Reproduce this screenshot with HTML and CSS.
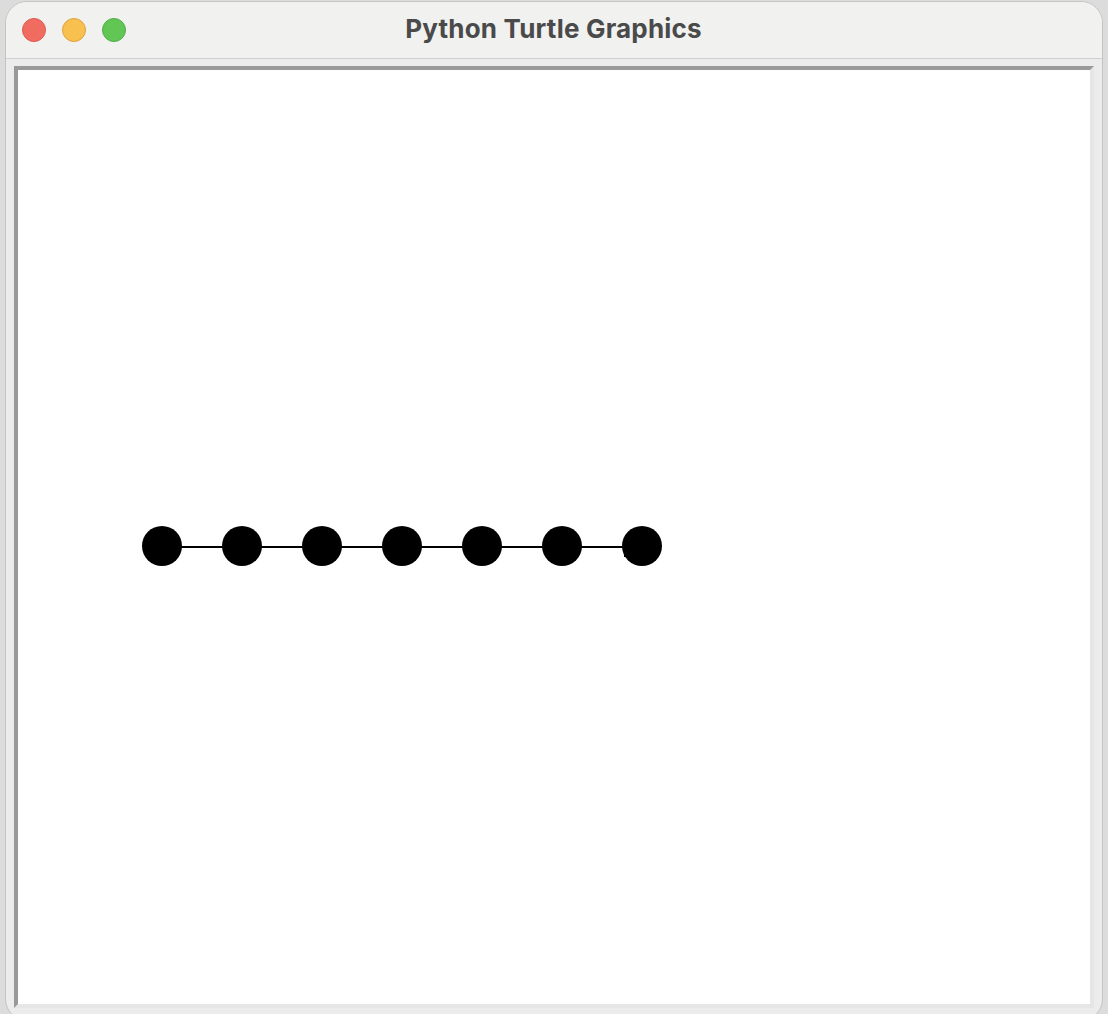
FILE: index.html
```html
<!DOCTYPE html>
<html lang="en">
<head>
  <meta charset="UTF-8">
  <title>Python Turtle Graphics</title>
  <link rel="stylesheet" href="styles.css">
</head>
<body>

<div class="window">

  <!-- Title bar -->
  <div class="titlebar">
    <div class="lights">
      <span class="light light-close"></span>
      <span class="light light-min"></span>
      <span class="light light-max"></span>
    </div>
    <h1>Python Turtle Graphics</h1>
  </div>

  <!-- Turtle canvas -->
  <div class="content">
    <div class="canvas">
      <svg class="drawing" width="1072" height="934" viewBox="0 0 1072 934">
        <rect x="144" y="476" width="465" height="2" fill="#000"/>
        <circle cx="144" cy="476" r="20"/>
        <circle cx="224" cy="476" r="20"/>
        <circle cx="304" cy="476" r="20"/>
        <circle cx="384" cy="476" r="20"/>
        <circle cx="464" cy="476" r="20"/>
        <circle cx="544" cy="476" r="20"/>
        <circle cx="624" cy="476" r="20"/>
        <rect x="606" y="484" width="3" height="3"/>
      </svg>
    </div>
  </div>

</div>

</body>
</html>
```

FILE: styles.css
```css
* {
  box-sizing: border-box;
}

html, body {
  margin: 0;
  padding: 0;
  height: 100%;
  overflow: hidden;
}

body {
  background: #dcdcdc;
  padding: 1px 5px 0;
}

.window {
  height: 1020px;
  border: 1px solid #c4c4c4;
  border-radius: 22px;
  background: #ececec;
  overflow: hidden;
  display: flex;
  flex-direction: column;
}

.titlebar {
  height: 57px;
  flex-shrink: 0;
  background: #f1f1ef;
  border-bottom: 1px solid #d0d0d0;
  display: flex;
  align-items: center;
  justify-content: center;
  position: relative;
}

.lights {
  position: absolute;
  left: 16px;
  top: 16px;
  display: flex;
  gap: 16px;
}

.light {
  width: 24px;
  height: 24px;
  border-radius: 50%;
  border: 1px solid;
}

.light-close {
  background: #f16c60;
  border-color: #dc5a50;
}

.light-min {
  background: #f8c04e;
  border-color: #dfa23c;
}

.light-max {
  background: #62c655;
  border-color: #4fae45;
}

h1 {
  margin: 0 1px 3px 0;
  font-family: Inter, "Liberation Sans", sans-serif;
  font-size: 26px;
  font-weight: 700;
  letter-spacing: 0.2px;
  color: #4a4a4a;
}

.content {
  flex: 1;
  padding: 7px 8px 0;
}

.canvas {
  width: 1080px;
  height: 942px;
  background: #fff;
  border-style: solid;
  border-width: 4px;
  border-color: #999 #e6e6e6 #e6e6e6 #999;
}

.drawing {
  display: block;
}
```
